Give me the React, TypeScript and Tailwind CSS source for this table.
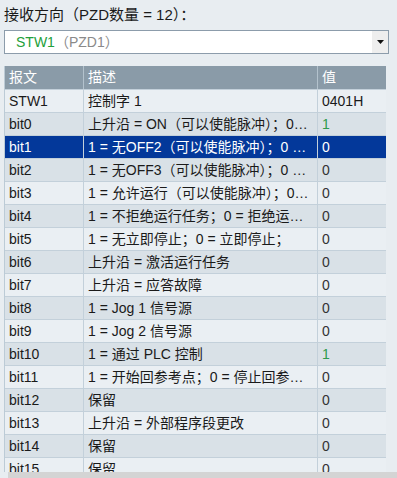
import React from "react";

type Row = { name: string; desc: string; value: string };

const rows: Row[] = [
  { name: "STW1", desc: "控制字 1", value: "0401H" },
  { name: "bit0", desc: "上升沿 = ON（可以使能脉冲）；0 = OFF1（制动）", value: "1" },
  { name: "bit1", desc: "1 = 无OFF2（可以使能脉冲）；0 = OFF2", value: "0" },
  { name: "bit2", desc: "1 = 无OFF3（可以使能脉冲）；0 = OFF3", value: "0" },
  { name: "bit3", desc: "1 = 允许运行（可以使能脉冲）；0 = 禁止运行", value: "0" },
  { name: "bit4", desc: "1 = 不拒绝运行任务；0 = 拒绝运行任务", value: "0" },
  { name: "bit5", desc: "1 = 无立即停止；0 = 立即停止；", value: "0" },
  { name: "bit6", desc: "上升沿 = 激活运行任务", value: "0" },
  { name: "bit7", desc: "上升沿 = 应答故障", value: "0" },
  { name: "bit8", desc: "1 = Jog 1 信号源", value: "0" },
  { name: "bit9", desc: "1 = Jog 2 信号源", value: "0" },
  { name: "bit10", desc: "1 = 通过 PLC 控制", value: "1" },
  { name: "bit11", desc: "1 = 开始回参考点；0 = 停止回参考点", value: "0" },
  { name: "bit12", desc: "保留", value: "0" },
  { name: "bit13", desc: "上升沿 = 外部程序段更改", value: "0" },
  { name: "bit14", desc: "保留", value: "0" },
  { name: "bit15", desc: "保留", value: "0" },
];

const font = { fontFamily: '"Liberation Sans", "Noto Sans CJK SC", sans-serif' };

export default function App() {
  return (
    <div className="h-[478px] w-[397px] overflow-hidden bg-[#e8edf1] text-[14px] text-[#1a1a1a]" style={font}>
      <div className="h-[30px] pl-1 pt-[6px] text-[15px] leading-[18px]">接收方向（PZD数量 = 12）：</div>

      <div className="mx-1 flex h-6 w-[385px] items-stretch border border-[#8c9cab] bg-white">
        <div className="flex flex-1 items-center pl-[11px]">
          <span className="text-[#23a03a]">STW1</span>
          <span className="text-[#8a8a8a]">（PZD1）</span>
        </div>
        <div className="flex w-[16px] items-center justify-center bg-[#eeeeee]">
          <svg width="7" height="4" viewBox="0 0 7 4">
            <path d="M0 0H7L3.5 4Z" fill="#111" />
          </svg>
        </div>
      </div>

      <div className="mt-3 h-[406px] w-[386px] overflow-hidden pl-1">
        <div className="grid grid-cols-[79px_234px_72px] border-l border-r border-[#bccbd6]">
          <div className="flex h-[23px] items-center border-r border-[#b3c2cd] bg-[#8a9ba8] pl-1 text-white">报文</div>
          <div className="flex h-[23px] items-center border-r border-[#b3c2cd] bg-[#8a9ba8] pl-1 text-white">描述</div>
          <div className="flex h-[23px] items-center bg-[#8a9ba8] pl-1 text-white">值</div>
          {rows.map((r, i) => {
            const selected = i === 2;
            const bg = selected ? "bg-[#03389a] text-white" : i % 2 === 1 ? "bg-[#d9e1e7]" : "bg-[#eaeff3]";
            const valueColor = selected ? "text-white" : r.value === "1" ? "text-[#2f9a4c]" : r.value === "0" ? "text-[#333333]" : "";
            return (
              <React.Fragment key={r.name}>
                <div className={`flex h-[23px] items-center border-r border-t border-[#c3d0da] pl-1 ${bg}`}>{r.name}</div>
                <div className={`flex h-[23px] min-w-0 items-center border-r border-t border-[#c3d0da] pl-1 pr-2 ${bg}`}>
                  <span className="truncate">{r.desc}</span>
                </div>
                <div className={`flex h-[23px] items-center border-t border-[#c3d0da] pl-1 ${bg} ${valueColor}`}>{r.value}</div>
              </React.Fragment>
            );
          })}
        </div>
      </div>
      <div className="ml-2 h-[10px] bg-[#d4d4d4]" />
    </div>
  );
}
